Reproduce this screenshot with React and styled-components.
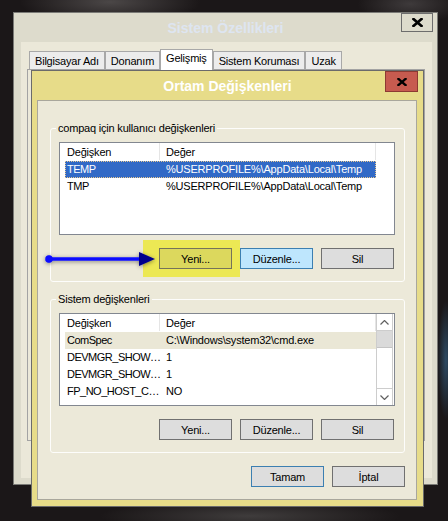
import React from "react";
import styled, { createGlobalStyle, css } from "styled-components";

const GlobalStyle = createGlobalStyle`
  html, body {
    margin: 0;
    padding: 0;
  }
  body {
    width: 448px;
    height: 521px;
    overflow: hidden;
    background: #1b1718;
    font-family: "Liberation Sans", Arial, sans-serif;
    font-size: 11px;
    letter-spacing: -0.2px;
    color: #000;
  }
`;

const Desktop = styled.div`
  position: relative;
  width: 448px;
  height: 521px;
  overflow: hidden;
  background:
    radial-gradient(ellipse 120px 30px at 110px 2px, #4b4747 0%, transparent 75%),
    radial-gradient(ellipse 70px 26px at 410px 4px, #3e3a3b 0%, transparent 75%),
    radial-gradient(ellipse 200px 22px at 250px 516px, #3f3c3c 0%, transparent 75%),
    radial-gradient(ellipse 10px 70px at 446px 360px, #2d4a63 0%, transparent 85%),
    #1b1718;
`;

/* ---------- outer window: Sistem Özellikleri ---------- */

const Window = styled.div`
  position: absolute;
  left: 13px;
  top: 12px;
  width: 425px;
  height: 473px;
  box-sizing: border-box;
  border: 1px solid #7a7a76;
  background: #dddbcc;
  padding: 0 5px 6px 7px;
  display: flex;
  flex-direction: column;
`;

const TitleBar = styled.div`
  position: relative;
  height: ${(p) => p.$h}px;
  margin: ${(p) => p.$m};
  display: flex;
  align-items: center;
  justify-content: center;
  flex-shrink: 0;
  font-size: 14px;
  font-weight: bold;
  letter-spacing: 0;
  color: ${(p) => p.$color};
`;

const CloseBtn = styled.div`
  position: absolute;
  top: 0;
  right: ${(p) => p.$right}px;
  width: ${(p) => p.$w}px;
  height: ${(p) => p.$h}px;
  box-sizing: border-box;
  border: 1px solid ${(p) => p.$border};
  background: ${(p) => p.$bg};
  display: flex;
  align-items: center;
  justify-content: center;
`;

const WinBody = styled.div`
  flex: 1;
  background: #ebe8d9;
  padding: 7px 7px 0 6px;
  display: flex;
  flex-direction: column;
`;

const TabStrip = styled.div`
  display: flex;
  align-items: flex-end;
  height: 20px;
  padding-left: 2px;
`;

const Tab = styled.div`
  position: relative;
  height: 18px;
  box-sizing: border-box;
  padding: 2px 5px 0;
  border: 1px solid #a8a8a8;
  border-bottom: none;
  background: #ececec;
  line-height: 15px;
  white-space: nowrap;
  ${(p) =>
    p.$active &&
    css`
      height: 21px;
      margin-bottom: -1px;
      padding-top: 1px;
      background: #fff;
      z-index: 1;
    `}
`;

const TabPanel = styled.div`
  height: 372px;
  box-sizing: border-box;
  border: 1px solid #a3a3a3;
  background: #ebe8d9;
`;

/* ---------- dialog: Ortam Değişkenleri ---------- */

const Dialog = styled.div`
  position: absolute;
  left: 31px;
  top: 70px;
  width: 393px;
  height: 437px;
  box-sizing: border-box;
  border: 1px solid #6b6b6b;
  background: #e7dc89;
  padding: 0 6px 6px 5px;
  display: flex;
  flex-direction: column;
`;

const DialogBody = styled.div`
  position: relative;
  flex: 1;
  border: 1px solid #a9a79c;
  background: #ece9d9;
  padding: 27px 11px 12px 12px;
  display: flex;
  flex-direction: column;
`;

const Group = styled.div`
  position: relative;
  border: 1px solid #fdfdfb;
  border-radius: 3px;
  padding: 13px 9px 12px 8px;
  margin-top: ${(p) => p.$mt || 0}px;
`;

const Legend = styled.span`
  position: absolute;
  top: -7px;
  left: 5px;
  padding: 0 2px;
  line-height: 13px;
  background: #ece9d9;
  white-space: nowrap;
`;

const ListBox = styled.div`
  height: 93px;
  box-sizing: border-box;
  border: 1px solid #828790;
  background: #fff;
  display: flex;
`;

const ListMain = styled.div`
  flex: 1;
  display: flex;
  flex-direction: column;
`;

const HeaderRow = styled.div`
  display: flex;
  height: 17px;
  flex-shrink: 0;
`;

const HeaderCell = styled.div`
  width: ${(p) => p.$w}px;
  box-sizing: border-box;
  padding-left: ${(p) => p.$pl}px;
  border-right: 1px solid #e5e5e5;
  line-height: 18px;
  white-space: nowrap;
`;

const Rows = styled.div`
  padding-top: 1px;
`;

const Row = styled.div`
  display: flex;
  width: 311px;
  height: 17px;
  margin-left: 5px;
  box-sizing: border-box;
  line-height: 17px;
  ${(p) =>
    p.$selected &&
    css`
      background: #3169c6;
      color: #fff;
      outline: 1px dotted #e8c890;
      outline-offset: -1px;
    `}
  ${(p) =>
    p.$hover &&
    css`
      background: #eae7d6;
    `}
`;

const NameCell = styled.div`
  width: 99px;
  flex-shrink: 0;
  box-sizing: border-box;
  padding-left: 2px;
  letter-spacing: -0.5px;
  white-space: nowrap;
`;

const ValueCell = styled.div`
  padding-left: 2px;
  white-space: nowrap;
`;

const ScrollBar = styled.div`
  width: 17px;
  margin-right: 1px;
  box-sizing: border-box;
  border-left: 1px solid #cdcdcd;
  border-right: 1px solid #cdcdcd;
  display: flex;
  flex-direction: column;
`;

const ScrollArrow = styled.div`
  height: 16px;
  display: flex;
  align-items: center;
  justify-content: center;
  border-${(p) => (p.$down ? "top" : "bottom")}: 1px solid #cdcdcd;
`;

const Thumb = styled.div`
  height: 16px;
  background: #dadada;
  border-bottom: 1px solid #c4c4c4;
`;

const Track = styled.div`
  flex: 1;
`;

const ButtonRow = styled.div`
  display: flex;
  justify-content: flex-end;
  gap: 8px;
  margin-top: 13px;
  margin-right: ${(p) => p.$mr || 0}px;
`;

const Button = styled.div`
  position: relative;
  width: 73px;
  height: 21px;
  box-sizing: border-box;
  border: 1px solid #707070;
  background: #dddddd;
  display: flex;
  align-items: center;
  justify-content: center;
  ${(p) =>
    p.$variant === "hover" &&
    css`
      background: #bee6fd;
      border-color: #3c7fb1;
    `}
  ${(p) =>
    p.$variant === "default" &&
    css`
      border-color: #3c7fb1;
    `}
  ${(p) =>
    p.$variant === "marked" &&
    css`
      background: #dcd85d;
      border-color: #75735a;
      box-shadow: 0 0 0 8px #ece854, -8px 0 0 8px #ece854;
    `}
`;

const Arrow = styled.svg`
  position: absolute;
  left: 6px;
  top: 148px;
  overflow: visible;
`;

const XMark = ({ w = 11, h = 9 }) => (
  <svg width={w} height={h} viewBox="0 0 11 9">
    <path d="M1.5 1 L9.5 8 M9.5 1 L1.5 8" stroke="#000" strokeWidth="2.6" strokeLinecap="square" />
  </svg>
);

const Chevron = ({ down }) => (
  <svg width="9" height="5" viewBox="0 0 9 5">
    <polyline
      points={down ? "0.5,0.5 4.5,4.5 8.5,0.5" : "0.5,4.5 4.5,0.5 8.5,4.5"}
      fill="none"
      stroke="#606060"
      strokeWidth="1.2"
    />
  </svg>
);

const userVars = [
  { name: "TEMP", value: "%USERPROFILE%\\AppData\\Local\\Temp", selected: true },
  { name: "TMP", value: "%USERPROFILE%\\AppData\\Local\\Temp" },
];

const systemVars = [
  { name: "ComSpec", value: "C:\\Windows\\system32\\cmd.exe", hover: true },
  { name: "DEVMGR_SHOW…", value: "1" },
  { name: "DEVMGR_SHOW…", value: "1" },
  { name: "FP_NO_HOST_C…", value: "NO" },
];

function VarList({ items, scroll }) {
  return (
    <ListBox>
      <ListMain>
        <HeaderRow>
          <HeaderCell $w={100} $pl={7}>Değişken</HeaderCell>
          <HeaderCell $w={216} $pl={6}>Değer</HeaderCell>
        </HeaderRow>
        <Rows>
          {items.map((it, i) => (
            <Row key={i} $selected={it.selected} $hover={it.hover}>
              <NameCell>{it.name}</NameCell>
              <ValueCell>{it.value}</ValueCell>
            </Row>
          ))}
        </Rows>
      </ListMain>
      {scroll && (
        <ScrollBar>
          <ScrollArrow>
            <Chevron />
          </ScrollArrow>
          <Thumb />
          <Track />
          <ScrollArrow $down>
            <Chevron down />
          </ScrollArrow>
        </ScrollBar>
      )}
    </ListBox>
  );
}

export default function App() {
  return (
    <Desktop>
      <GlobalStyle />
      <Window>
        <TitleBar $h={29} $m="0 -5px 0 -7px" $color="#dde5f1">
          Sistem Özellikleri
          <CloseBtn $right={4} $w={32} $h={19} $border="#6d6d6d" $bg="#dddbcc">
            <XMark />
          </CloseBtn>
        </TitleBar>
        <WinBody>
          <TabStrip>
            <Tab>Bilgisayar Adı</Tab>
            <Tab>Donanım</Tab>
            <Tab $active>Gelişmiş</Tab>
            <Tab>Sistem Koruması</Tab>
            <Tab>Uzak</Tab>
          </TabStrip>
          <TabPanel />
        </WinBody>
      </Window>

      <Dialog>
        <TitleBar $h={29} $m="0 -6px 0 -5px" $color="#ffffff">
          Ortam Değişkenleri
          <CloseBtn $right={5} $w={33} $h={21} $border="#8d3a32" $bg="#c75b4f">
            <XMark w={10} h={8} />
          </CloseBtn>
        </TitleBar>
        <DialogBody>
          <Group>
            <Legend>compaq için kullanıcı değişkenleri</Legend>
            <VarList items={userVars} />
            <ButtonRow $mr={1}>
              <Button $variant="marked">Yeni...</Button>
              <Button $variant="hover">Düzenle...</Button>
              <Button>Sil</Button>
            </ButtonRow>
          </Group>

          <Group $mt={17}>
            <Legend>Sistem değişkenleri</Legend>
            <VarList items={systemVars} scroll />
            <ButtonRow $mr={1}>
              <Button>Yeni...</Button>
              <Button>Düzenle...</Button>
              <Button>Sil</Button>
            </ButtonRow>
          </Group>

          <ButtonRow>
            <Button $variant="default">Tamam</Button>
            <Button>İptal</Button>
          </ButtonRow>

          <Arrow width="112" height="22" viewBox="0 0 112 22">
            <defs>
              <filter id="arrowShadow" x="-10%" y="-60%" width="120%" height="220%">
                <feDropShadow dx="0" dy="1" stdDeviation="2" floodColor="#000" floodOpacity="0.45" />
              </filter>
            </defs>
            <g filter="url(#arrowShadow)">
              <line x1="5" y1="10" x2="98" y2="10" stroke="#0a0aff" strokeWidth="3.5" />
              <circle cx="5" cy="10" r="3.8" fill="#0a0aff" />
              <polygon points="95,3 111,10 95,17" fill="#00008c" />
            </g>
          </Arrow>
        </DialogBody>
      </Dialog>
    </Desktop>
  );
}
